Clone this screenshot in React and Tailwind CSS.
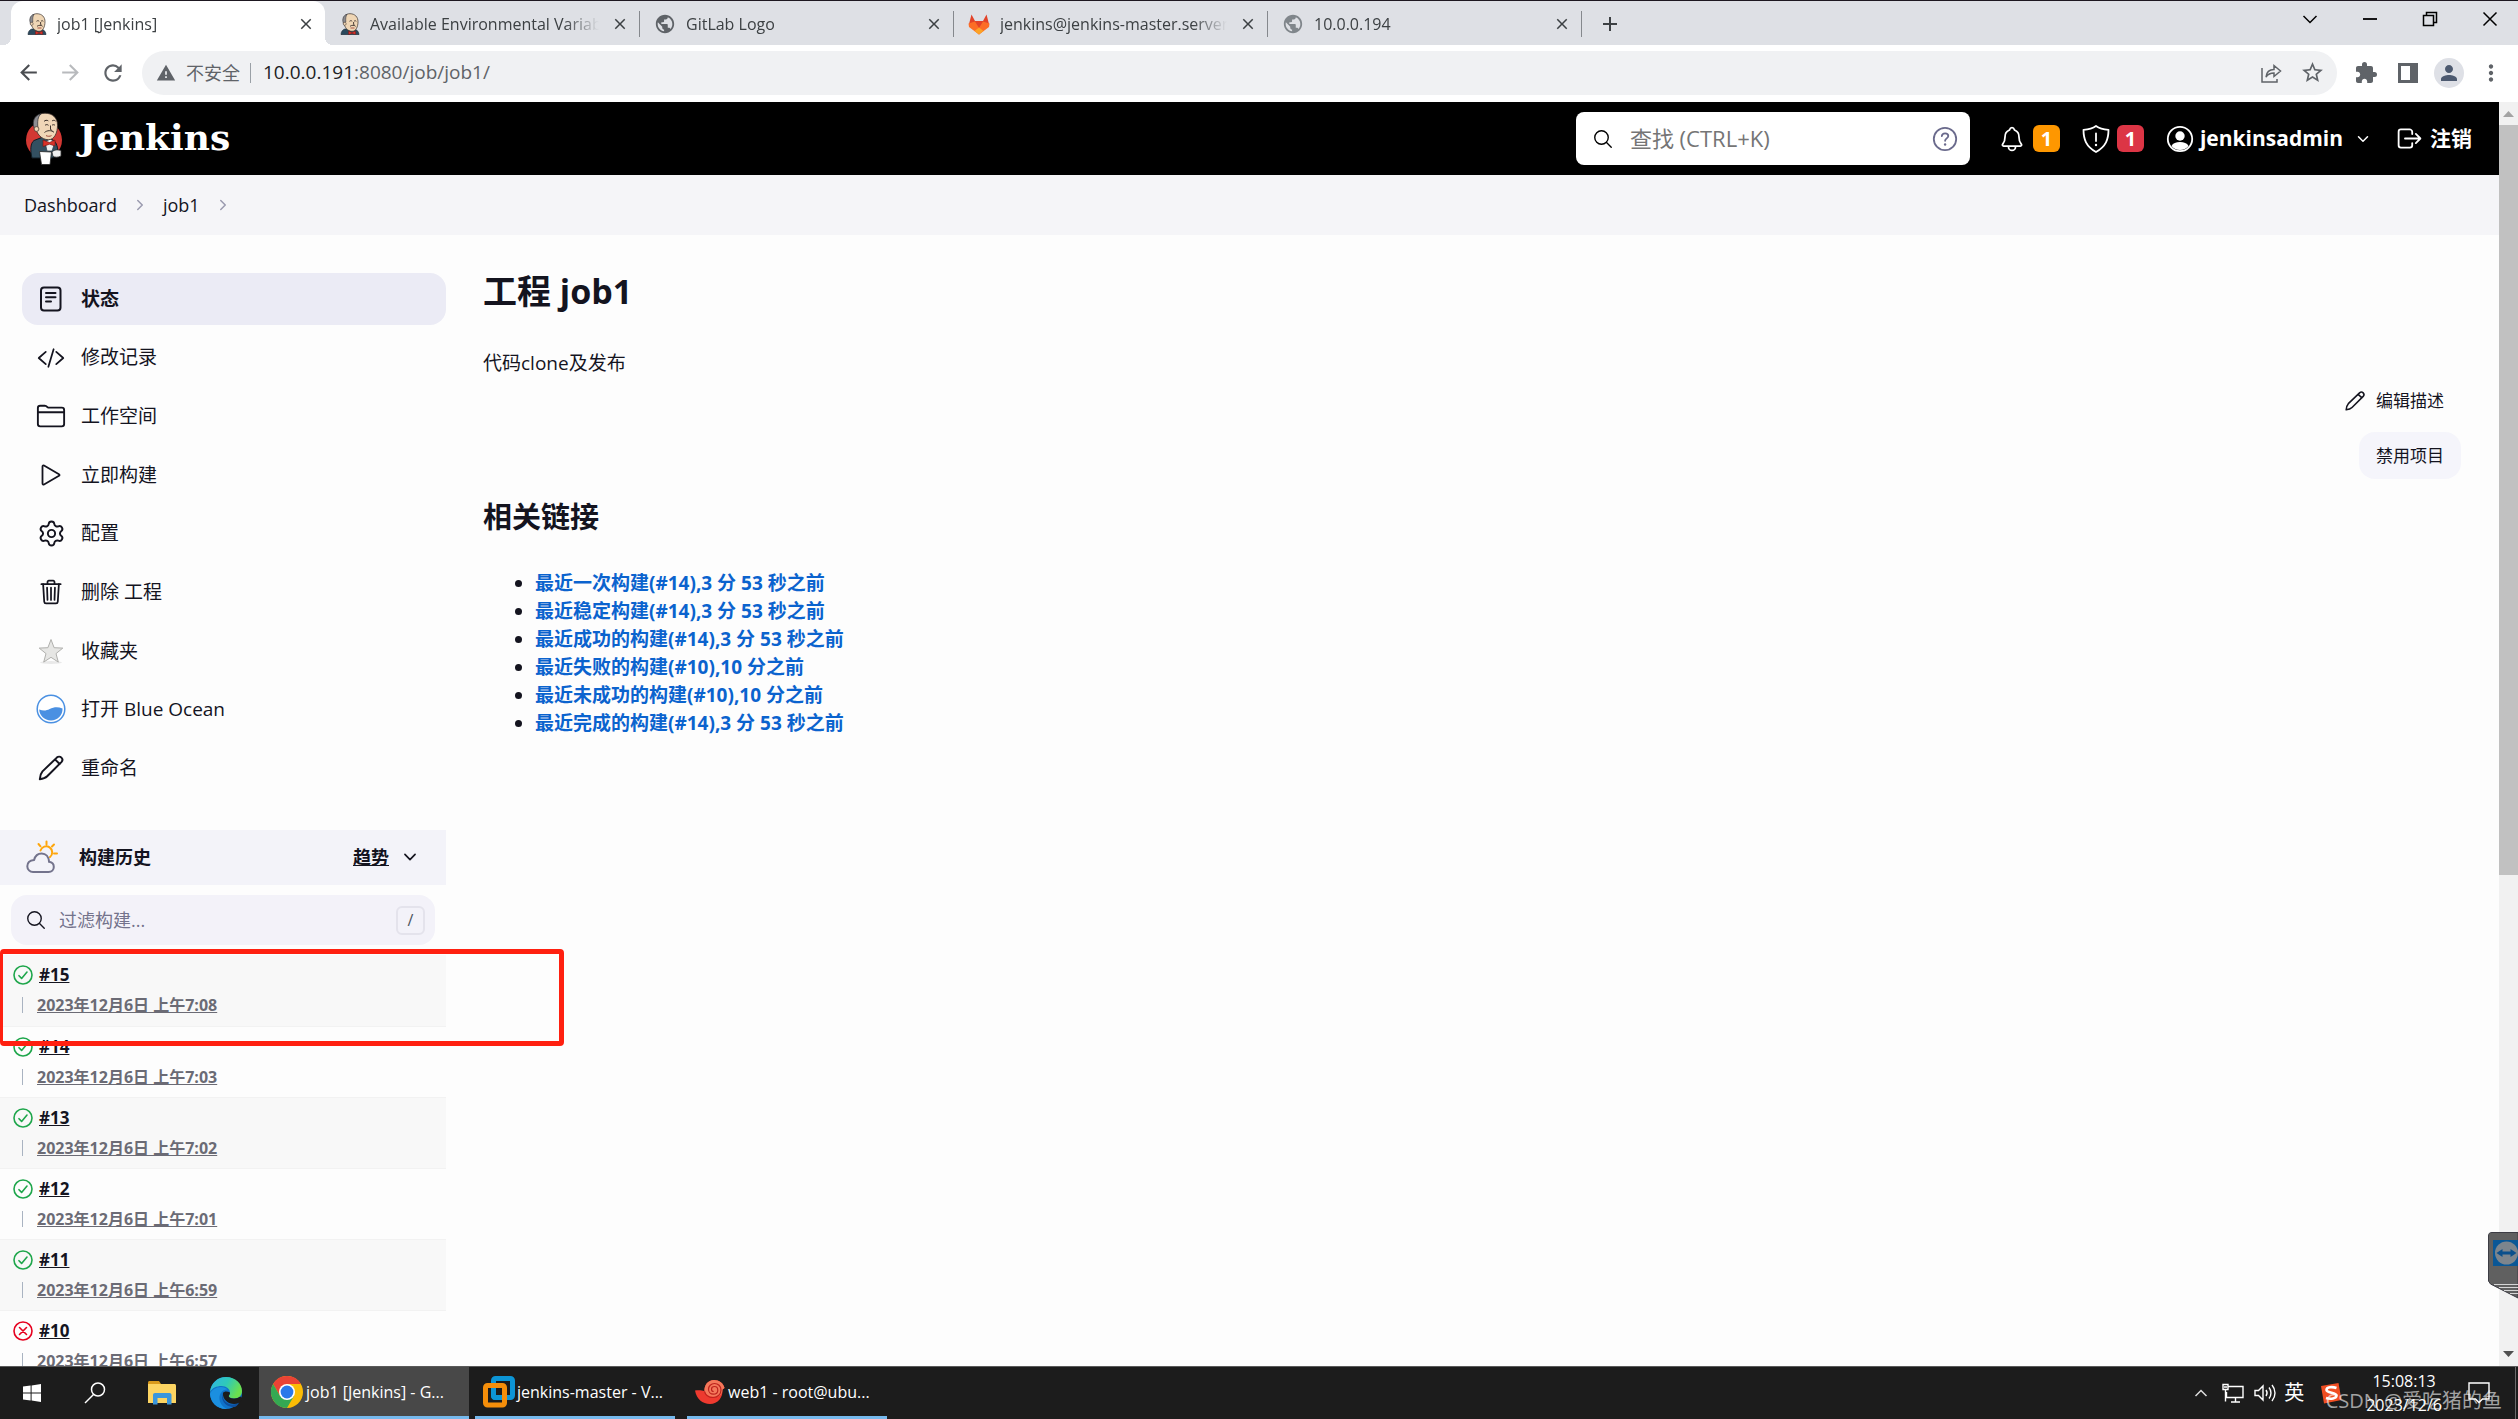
import { Settings } from "lucide-react";
import {
  IoCodeSlashOutline,
  IoFolderOutline,
  IoTrashOutline,
  IoSearchOutline,
  IoNotificationsOutline,
  IoLogOutOutline,
  IoChevronDownOutline,
  IoChevronForwardOutline,
} from "react-icons/io5";
import {
  MdArrowBack,
  MdArrowForward,
  MdRefresh,
  MdWarning,
  MdStarOutline,
  MdExtension,
  MdPerson,
  MdMoreVert,
  MdPublic,
  MdClose,
  MdAdd,
} from "react-icons/md";

// =========================
// ICONS
// =========================
function JenkinsHead({ className }) {
  return (
    <svg viewBox="0 0 20 22" className={className} aria-hidden="true">
      <path d="M1 21.5c.3-3 1.5-4.8 4-5.5h9c3 .6 4.600 2.500 5 5.500z" fill="#2b4a5e" stroke="#1b2b38" strokeWidth=".7" />
      <path d="M3.500 9C2.500 4 5.500.6 10 .7c5 .1 8 3.300 8 8 0 5-2 9.600-6 9.600-4.500 0-7.500-4-8.500-9.300z" fill="#efd6b5" stroke="#3a2f2a" strokeWidth=".7" />
      <path d="M3.400 10.500C2 6 3.300 2.300 7 1.300 5.600 3.500 5.600 6 5.800 9z" fill="#8b8b90" stroke="#3a3a3e" strokeWidth=".6" />
      <circle cx="4.700" cy="10.800" r="1.500" fill="#efd6b5" stroke="#3a2f2a" strokeWidth=".5" />
      <path d="M9.500 8.300c.8-.8 2-.8 2.700 0M14 8.300c.8-.8 1.700-.6 2.300 0M13.600 9v2.500l1 .5M10 13.300c1.500-1.300 4.500-1.300 5.600 0" fill="none" stroke="#3a2f2a" strokeWidth=".9" />
      <path d="M10.500 15h4" stroke="#a04a3a" strokeWidth=".9" />
      <path d="M8.500 18l3.500 1.600 3.600-1.600v3.600L12 20.400l-3.500 1.200z" fill="#d8322a" stroke="#6b1410" strokeWidth=".4" />
    </svg>
  );
}

function JenkinsLogo() {
  return (
    <svg viewBox="0 0 38 53" className="h-[53px] w-[38px]" aria-hidden="true">
      <ellipse cx="19" cy="28" rx="18" ry="18.500" fill="#d33833" />
      <path d="M7 46C5 38 5.500 31 9 28.500l9-3.500 10 3c4 2.500 5 8 5 15l-6 3H10z" fill="#335061" stroke="#101c24" strokeWidth="1" />
      <path d="M20 30l5-3 5 3-3 9h-5z" fill="#f0f0f0" stroke="#2a3a46" strokeWidth=".7" />
      <path d="M10 14C8.500 6 13 1.200 20 1.200c7.500 0 12.500 4.500 12.500 12 0 7.500-3 14.500-9 14.500C16.500 27.700 11.500 22 10 14z" fill="#f0d6b7" stroke="#3a2f2a" strokeWidth=".8" />
      <path d="M10 18C6.500 11 8.500 3.500 16 1.800 12.500 5 12.500 9.500 12.800 15z" fill="#8d8d92" stroke="#3a3a3e" strokeWidth=".8" />
      <circle cx="11.500" cy="17" r="2.400" fill="#f0d6b7" stroke="#3a2f2a" strokeWidth=".7" />
      <path d="M19 9.500c1-1.400 3-1.600 4.300-.6M27 9c1-1 2.600-.9 3.600.1M20 13.300c1-.9 2.600-.9 3.500 0M27 13.300c.8-.8 2.200-.8 3 0M25.500 13.500v4.200l1.700.7M19.500 20.500c2.500-2.400 7-2.400 9.500-.2" fill="none" stroke="#3a2f2a" strokeWidth="1" />
      <path d="M21 23.600c1.500.9 4 .9 5.500 0" fill="none" stroke="#a04a3a" strokeWidth="1" />
      <path d="M18 28l6.500 2.500L30 28v6l-5.500-1.800L18 34.500z" fill="#d8322a" stroke="#6b1410" strokeWidth=".6" />
      <path d="M14.500 39.500l12 .5-1.500 12.500h-8.500z" fill="#fff" stroke="#222" strokeWidth=".8" />
      <path d="M27 40c2-2.500 6-2.500 9-1.500v5.500c-3 1.500-6 1.500-8 .3z" fill="#efefef" stroke="#333" strokeWidth=".8" />
    </svg>
  );
}

function GitLabIcon() {
  return (
    <svg viewBox="0 0 22 21" className="h-[21px] w-[22px]" aria-hidden="true">
      <path d="M3.500.5L1 10l10 10.500L21 10 18.500.5 15 7H7z" fill="#e24329" />
      <path d="M7 7.500L.5 9.500 1 13l10 7.500L21 13l.5-3.500-6.500-2L11 14z" fill="#fc6d26" />
      <path d="M11 13.500L6.500 17l4.500 3.500 4.500-3.500z" fill="#fca326" />
    </svg>
  );
}

const StatusIcon = () => (
  <svg viewBox="0 0 28 28" className="size-7" fill="none" stroke="currentColor" strokeWidth="2" strokeLinecap="round" aria-hidden="true">
    <rect x="4" y="2.500" width="19.500" height="23" rx="3" />
    <path d="M9 8h9.500M9 12.200h9.500M9 16.400h5" />
  </svg>
);

const PlayIcon = () => (
  <svg viewBox="0 0 28 28" className="size-7" fill="none" stroke="currentColor" strokeWidth="1.800" strokeLinejoin="round" aria-hidden="true">
    <path d="M5.500 5.400v17.200c0 .9.800 1.300 1.500.9l15-8.700c.7-.4.700-1.200 0-1.600L7 4.500c-.7-.4-1.500 0-1.500.9z" />
  </svg>
);

const StarIcon = () => (
  <svg viewBox="0 0 28 28" className="size-7" aria-hidden="true">
    <ellipse cx="14" cy="25.500" rx="11" ry="1.500" fill="#e9e9e9" />
    <path d="M14 2.500l3.100 8.200 8.700.4-6.800 5.500 2.300 8.500L14 20.300l-7.300 4.800L9 16.600l-6.800-5.500 8.700-.4z" fill="#e6e6e4" stroke="#b0b0ad" strokeWidth="1" strokeLinejoin="round" />
  </svg>
);

const OceanIcon = () => (
  <svg viewBox="0 0 30 30" className="size-[30px]" aria-hidden="true">
    <circle cx="15" cy="15" r="13.800" fill="#fff" stroke="#4a90e2" strokeWidth="1.500" />
    <path d="M3.200 15.500c4 1.500 7 1.300 10.500-.5 4-2 8-2.500 12.800-.6.400 6.600-5 12-11.500 12S3.400 21.500 3.200 15.500z" fill="#4a90e2" />
  </svg>
);

const PencilIcon = ({ className }) => (
  <svg viewBox="0 0 28 28" className={className} fill="none" stroke="currentColor" strokeWidth="2" strokeLinecap="round" strokeLinejoin="round" aria-hidden="true">
    <path d="M2.800 25.200c.2-3.200 1-5.900 2.700-7.800L19.800 3.600c1.300-1.200 3.400-1.200 4.600 0s1.200 3.200 0 4.500L10.200 22.300c-1.800 1.800-4.500 2.600-7.400 2.900zM18 5.400l4.700 4.600" />
  </svg>
);

const WeatherIcon = () => (
  <svg viewBox="0 0 34 34" className="size-[34px]" fill="none" strokeLinecap="round" aria-hidden="true">
    <path d="M15.500 10.500a6 6 0 1 1 9.500 6.500M21.500 1.500v3M13.500 4l2 2.300M29 4.500l-2 2M29 13.500h3" stroke="#fea60c" strokeWidth="2" />
    <path d="M8 32h15.500c3.200 0 5.300-2.200 5.300-5 0-2.900-2-4.800-4.700-5.200-.4-5-3.300-8.300-7.400-8.300-3.800 0-6.600 2.500-7.600 6.400-4 .4-6.800 2.800-6.800 6.300 0 3.300 2.600 5.800 5.700 5.800z" stroke="#73738c" strokeWidth="2" />
  </svg>
);

const ShieldIcon = () => (
  <svg viewBox="0 0 28 28" className="size-7" fill="none" stroke="currentColor" strokeWidth="1.800" strokeLinecap="round" strokeLinejoin="round" aria-hidden="true">
    <path d="M14 1c3.500 2.600 7.500 3.500 12.500 3.800 0 9.500-2.500 16.500-12.500 22.200C4 21.300 1.500 14.300 1.500 4.800 6.500 4.500 10.500 3.600 14 1z" />
    <path d="M14 8.500v7.500" />
    <circle cx="14" cy="20" r="1.200" fill="currentColor" stroke="none" />
  </svg>
);

const UserIcon = () => (
  <svg viewBox="0 0 28 28" className="size-7" aria-hidden="true">
    <circle cx="14" cy="14" r="12.200" fill="none" stroke="currentColor" strokeWidth="1.800" />
    <circle cx="14" cy="11" r="4.700" fill="currentColor" />
    <path d="M5.500 21c1.500-3 4.500-4 8.500-4s7 1 8.500 4c-2 2.600-5 4-8.500 4s-6.500-1.400-8.500-4z" fill="currentColor" />
  </svg>
);

const HelpIcon = () => (
  <svg viewBox="0 0 26 26" className="size-[26px]" fill="none" stroke="currentColor" strokeWidth="1.800" strokeLinecap="round" aria-hidden="true">
    <circle cx="13" cy="13" r="11.200" />
    <path d="M9.800 10.200c.2-1.900 1.500-2.900 3.300-2.900 1.900 0 3.200 1.100 3.200 2.700 0 2.300-3.200 2.500-3.200 4.800" />
    <circle cx="13.100" cy="18.500" r="1.200" fill="currentColor" stroke="none" />
  </svg>
);

const PassIcon = () => (
  <svg viewBox="0 0 20 20" className="size-5" fill="none" stroke="#1ea64b" strokeWidth="1.600" strokeLinecap="round" strokeLinejoin="round" aria-hidden="true">
    <circle cx="10" cy="10" r="9" />
    <path d="M6 10.700l2.600 2.700L14 7" />
  </svg>
);

const FailIcon = () => (
  <svg viewBox="0 0 20 20" className="size-5" fill="none" stroke="#e6001f" strokeWidth="1.600" strokeLinecap="round" aria-hidden="true">
    <circle cx="10" cy="10" r="9" />
    <path d="M6.500 6.500l7 7M13.500 6.500l-7 7" />
  </svg>
);

const ShareIcon = () => (
  <svg viewBox="0 0 22 22" className="size-[22px]" fill="none" stroke="currentColor" strokeWidth="1.500" aria-hidden="true">
    <path d="M2 6v14h15v-3M6 15c.5-5 3-7.500 8-7.500V3.500L20.500 9 14 14.500V11c-4 0-6 1-8 4z" />
  </svg>
);

const WindowsIcon = () => (
  <svg viewBox="0 0 18 18" className="size-[18px]" fill="#fff" aria-hidden="true">
    <path d="M0 2.600L7.600 1.500v7H0zM8.600 1.400L18 0v8.500H8.600zM0 9.400h7.600v7L0 15.400zM8.600 9.400H18V18l-9.400-1.400z" />
  </svg>
);

const TaskSearchIcon = () => (
  <svg viewBox="0 0 22 22" className="size-[22px]" fill="none" stroke="#fff" strokeWidth="1.500" aria-hidden="true">
    <circle cx="14" cy="7.500" r="6.500" />
    <path d="M9.500 12.500L1 21" />
  </svg>
);

const ExplorerIcon = () => (
  <svg viewBox="0 0 28 24" className="h-6 w-7" aria-hidden="true">
    <path d="M0 1.500C0 .7.700 0 1.500 0H11l2 3H0z" fill="#d99a1c" />
    <path d="M0 3h26.500c.8 0 1.500.7 1.500 1.500V22H0z" fill="#fcd462" />
    <path d="M5 23.500V14c0-1.200.8-2 2-2h14.500c1.200 0 2 .8 2 2v9.500H19V17H9.500v6.500z" fill="#3a96dd" />
  </svg>
);

const EdgeIcon = () => (
  <svg viewBox="0 0 32 32" className="size-8" aria-hidden="true">
    <defs>
      <linearGradient id="edgeTop" x1="0" y1="0" x2="1" y2=".4">
        <stop offset="0" stopColor="#2fb4e8" />
        <stop offset=".55" stopColor="#2fc9b8" />
        <stop offset="1" stopColor="#6be04e" />
      </linearGradient>
    </defs>
    <circle cx="16" cy="16" r="16" fill="#1072c8" />
    <path d="M0 15C1 6 7.500 0 16 0c9.500 0 16 6.500 16 14 0 5-3.500 7.500-8 7.500-3.500 0-5.200-1.200-5.200-2.300 0-.9 1.200-1.400 1.200-3.700 0-3.500-3.500-6.500-8.500-6.500C6.500 9 2 11 0 15z" fill="url(#edgeTop)" />
    <path d="M12 14.500c-5 5-2.500 14 5 17.400C7.500 32.500.6 26 0 17c1.500-4 6-7 11-7 3 0 5 1 6.500 2.500-2 0-4 .5-5.500 2z" fill="#1b8fe0" />
    <path d="M13.500 15c-3 5.500 2 12.500 9 12.500 2.500 0 4.600-.6 6.500-1.700-.8 1.700-2 3-3.500 4-9 1.500-16.500-7-12-14.800z" fill="#0d4f9e" />
    <path d="M13 16c1.200-1.800 4-2 7-.5 0 2.300-1.200 2.800-1.200 3.700 0 1.100 1.700 2.300 5.200 2.300 2.600 0 4.700-.6 6.200-1.900l1.800 1.400c-.5 2-1.500 3.500-3 4.800-7 4-17-2-16-9.800z" fill="#1c1c1c" />
  </svg>
);

const ChromeIcon = () => (
  <svg viewBox="0 0 32 32" className="size-8" aria-hidden="true">
    <circle cx="16" cy="16" r="16" fill="#fbbc05" />
    <path d="M2.140 8A16 16 0 0 1 29.860 8H16L9.070 20z" fill="#ea4335" />
    <path d="M2.140 8L9.070 20H22.930L16 32A16 16 0 0 1 2.140 8z" fill="#34a853" />
    <circle cx="16" cy="16" r="8" fill="#fff" />
    <circle cx="16" cy="16" r="6.400" fill="#2a78ea" />
  </svg>
);

const VmwareIcon = () => (
  <svg viewBox="0 0 32 32" className="size-8" fill="none" strokeWidth="5" aria-hidden="true">
    <rect x="10.500" y="2.500" width="19" height="19" rx="2" stroke="#0c95d6" />
    <rect x="2.500" y="9.500" width="19" height="19.500" rx="2" stroke="#f58e0a" />
    <path d="M10.500 14v5.500c0 1.200.8 2 2 2h6" stroke="#0c95d6" />
  </svg>
);

const XshellIcon = () => (
  <svg viewBox="0 0 30 26" className="h-[26px] w-[30px]" aria-hidden="true">
    <path d="M0 11.500c3.500-.5 7-.3 9.500.8C9 6 13 1 19 1c5 0 9.500 3 10.500 8l-2 1.500c.5 8-4.500 14.500-12.500 14.500C7.500 25 1.500 20 0 11.500z" fill="#ee3a2f" />
    <path d="M9.500 12.300C9 6 13 1 19 1c5 0 9.500 3 10.500 8l-2 1.500c0 5-3.500 7.500-7.500 7.500-5 0-9-1.700-10.500-5.700z" fill="#f4785a" />
    <path d="M9.500 12.300c1 4 4.500 6.200 8.500 6.200 5 0 8-3.500 8-7.500S23 4.500 19.500 4.500s-6 2.700-6 5.700 2.200 5 4.800 5 4.500-1.700 4.500-4-1.500-3.700-3.300-3.700-3 1.200-3 2.700 1 2.300 2.200 2.300" fill="none" stroke="#bd231d" strokeWidth="1.200" />
  </svg>
);

// =========================
// DATA
// =========================
const tabs = [
  { title: "job1 [Jenkins]", icon: <JenkinsHead className="h-[22px] w-5" />, active: true },
  { title: "Available Environmental Variables", icon: <JenkinsHead className="h-[22px] w-5" /> },
  { title: "GitLab Logo", icon: <MdPublic className="size-[22px] text-[#5f6368]" />, line: true },
  { title: "jenkins@jenkins-master.server", icon: <GitLabIcon />, line: true },
  { title: "10.0.0.194", icon: <MdPublic className="size-[22px] text-[#80868b]" />, line: true },
];

const tasks = [
  { label: "状态", icon: <StatusIcon />, active: true },
  { label: "修改记录", icon: <IoCodeSlashOutline className="size-7" /> },
  { label: "工作空间", icon: <IoFolderOutline className="size-[30px]" /> },
  { label: "立即构建", icon: <PlayIcon /> },
  { label: "配置", icon: <Settings className="size-[29px]" strokeWidth={1.6} /> },
  { label: "删除 工程", icon: <IoTrashOutline className="size-7" /> },
  { label: "收藏夹", icon: <StarIcon /> },
  { label: "打开 Blue Ocean", icon: <OceanIcon /> },
  { label: "重命名", icon: <PencilIcon className="size-7" /> },
];

const builds = [
  { id: 15, time: "2023年12月6日 上午7:08", ok: true },
  { id: 14, time: "2023年12月6日 上午7:03", ok: true },
  { id: 13, time: "2023年12月6日 上午7:02", ok: true },
  { id: 12, time: "2023年12月6日 上午7:01", ok: true },
  { id: 11, time: "2023年12月6日 上午6:59", ok: true },
  { id: 10, time: "2023年12月6日 上午6:57", ok: false },
];

const permalinks = [
  "最近一次构建(#14),3 分 53 秒之前",
  "最近稳定构建(#14),3 分 53 秒之前",
  "最近成功的构建(#14),3 分 53 秒之前",
  "最近失败的构建(#10),10 分之前",
  "最近未成功的构建(#10),10 分之前",
  "最近完成的构建(#14),3 分 53 秒之前",
];

// =========================
// BROWSER
// =========================
function TabStrip() {
  return (
    <div className="flex h-[45px] items-end border-t border-[#1d1720] bg-[#dee0e5] pl-[11px] text-base text-[#3c4043]">
      {tabs.map((tab) => (
        <div
          key={tab.title}
          className={
            tab.active
              ? "relative flex h-11 w-[314px] items-center rounded-t-xl bg-white pt-0.5 pr-2.5 pl-4 before:absolute before:bottom-0 before:-left-2 before:size-2 before:bg-[radial-gradient(circle_at_0_0,transparent_8px,white_8px)] after:absolute after:-right-2 after:bottom-0 after:size-2 after:bg-[radial-gradient(circle_at_100%_0,transparent_8px,white_8px)]"
              : "flex h-11 w-[314px] items-center pt-0.5 pr-2.5"
          }
        >
          {!tab.active && (
            <span className={`mr-3.5 h-[26px] w-px ${tab.line ? "bg-[#85888d]" : ""}`} />
          )}
          {tab.icon}
          <span className="ml-2.5 flex-1 overflow-hidden mask-r-from-85% whitespace-nowrap">
            {tab.title}
          </span>
          <button aria-label="关闭标签页" className="ml-3">
            <MdClose className="size-[18px]" />
          </button>
        </div>
      ))}
      <button aria-label="新标签页" className="flex h-11 items-center gap-4 pt-0.5">
        <span className="h-[26px] w-px bg-[#85888d]" />
        <MdAdd className="size-6" />
      </button>
      <div className="ml-auto flex h-11 items-center gap-9 pr-4 pb-2 text-black">
        <button aria-label="搜索标签页">
          <svg viewBox="0 0 24 24" className="size-6" fill="none" stroke="currentColor" strokeWidth="1.500"><path d="M5.500 9l6.500 6.500L18.500 9" /></svg>
        </button>
        <button aria-label="最小化">
          <svg viewBox="0 0 24 24" className="size-6" stroke="currentColor" strokeWidth="1.800"><path d="M5 12h14" /></svg>
        </button>
        <button aria-label="还原">
          <svg viewBox="0 0 24 24" className="size-6" fill="none" stroke="currentColor" strokeWidth="1.500"><path d="M5.500 8.500h10v10h-10zM8.500 8.500v-3h10v10h-3" /></svg>
        </button>
        <button aria-label="关闭">
          <svg viewBox="0 0 24 24" className="size-6" stroke="currentColor" strokeWidth="1.500"><path d="M5.500 5.500l13 13M18.500 5.500l-13 13" /></svg>
        </button>
      </div>
    </div>
  );
}

function Toolbar() {
  return (
    <div className="flex h-[57px] items-center bg-white pr-3.5 pb-0.5 pl-4 text-[#5f6368]">
      <button aria-label="后退"><MdArrowBack className="size-[25px] text-[#4a4d51]" /></button>
      <button aria-label="前进" className="ml-[17px]"><MdArrowForward className="size-[25px] text-[#b8babd]" /></button>
      <button aria-label="重新加载" className="ml-[17px]"><MdRefresh className="size-[26px]" /></button>
      <div className="ml-4 flex h-11 flex-1 items-center rounded-full bg-[#f0f1f3] pr-3 pl-3.5 text-lg">
        <MdWarning className="size-5" />
        <span className="ml-2.5">不安全</span>
        <span className="ml-2.5 h-5 w-px bg-[#9aa0a6]" />
        <div className="ml-3 flex-1 text-[19px]">
          <span className="text-[#202124]">10.0.0.191</span>:8080/job/job1/
        </div>
        <button aria-label="分享"><ShareIcon /></button>
        <button aria-label="收藏" className="ml-[18px]"><MdStarOutline className="size-[25px]" /></button>
      </div>
      <button aria-label="扩展程序" className="ml-[17px]"><MdExtension className="size-6" /></button>
      <button aria-label="侧边栏" className="ml-5">
        <svg viewBox="0 0 20 20" className="size-5"><path fillRule="evenodd" d="M0 0h20v20H0zM3 3v14h9V3z" fill="currentColor" /></svg>
      </button>
      <button aria-label="个人资料" className="ml-4 flex size-[30px] items-center justify-center rounded-full bg-[#dee0e6] text-[#4d5a70]">
        <MdPerson className="size-6" />
      </button>
      <button aria-label="菜单" className="ml-3.5"><MdMoreVert className="size-[26px]" /></button>
    </div>
  );
}

// =========================
// JENKINS
// =========================
function Header() {
  return (
    <header className="flex h-[73px] shrink-0 items-center bg-black pr-[27px] pl-[25px] text-white">
      <a href="#" className="flex items-center gap-4">
        <JenkinsLogo />
        <span className="pb-1 font-['DejaVu_Serif',serif] text-4xl font-bold">Jenkins</span>
      </a>
      <label className="ml-auto flex h-[53px] w-[394px] items-center rounded-lg bg-white pr-3 pl-4 text-black">
        <IoSearchOutline className="size-[22px]" />
        <input
          type="search"
          placeholder="查找 (CTRL+K)"
          className="ml-4 min-w-0 flex-1 text-[22px] outline-none placeholder:text-[#757575]"
        />
        <span className="text-[#6a6a8c]"><HelpIcon /></span>
      </label>
      <a href="#" className="ml-7 flex items-center gap-[7px]">
        <IoNotificationsOutline className="size-7" />
        <span className="flex size-[27px] items-center justify-center rounded-md bg-[#fe9700] text-xl font-bold">1</span>
      </a>
      <a href="#" className="ml-[22px] flex items-center gap-[7px]">
        <ShieldIcon />
        <span className="flex size-[27px] items-center justify-center rounded-md bg-[#dc3545] text-xl font-bold">1</span>
      </a>
      <a href="#" className="ml-[22px] flex items-center text-[21px] font-bold">
        <UserIcon />
        <span className="ml-1.5">jenkinsadmin</span>
        <IoChevronDownOutline className="ml-3 size-4" />
      </a>
      <a href="#" className="ml-6 flex items-center gap-1.5 text-[21px] font-bold">
        <IoLogOutOutline className="size-[29px]" />
        注销
      </a>
    </header>
  );
}

function Sidebar() {
  return (
    <aside className="w-[446px] shrink-0">
      <nav className="mt-[38px] flex h-[521px] flex-col justify-between pl-[22px] text-[19px]">
        {tasks.map((task) => (
          <a
            key={task.label}
            href="#"
            className={`flex h-[52px] items-center rounded-2xl pl-3.5 ${task.active ? "bg-[#ebebf5] font-bold" : ""}`}
          >
            <span className="flex w-[30px] justify-center">{task.icon}</span>
            <span className="ml-[15px]">{task.label}</span>
          </a>
        ))}
      </nav>

      {/* Build history */}
      <div className="mt-9 flex h-[55px] items-center bg-[#f3f3f9] pr-[27px] pb-0.5 pl-[25px] text-lg font-bold">
        <WeatherIcon />
        <span className="ml-5">构建历史</span>
        <a href="#" className="ml-auto underline">趋势</a>
        <IoChevronDownOutline className="ml-3 size-[18px]" />
      </div>

      <label className="mx-[11px] mt-2.5 flex h-[50px] items-center rounded-2xl bg-[#f3f2f9] pr-2.5 pl-3.5">
        <IoSearchOutline className="size-[22px]" />
        <input
          type="search"
          placeholder="过滤构建..."
          className="ml-3 min-w-0 flex-1 text-lg outline-none placeholder:text-[#73738c]"
        />
        <kbd className="flex size-[29px] items-center justify-center rounded-md border-2 border-[#e4e3ec] font-['Open_Sans',sans-serif] text-base text-[#4d545d]">
          /
        </kbd>
      </label>

      <div className="relative mt-2.5">
        <table className="w-full">
          <tbody>
            {builds.map((build) => (
              <tr key={build.id} className="h-[71px] border-b border-[#f2f2f2] odd:bg-[#f8f8f8]">
                <td className="pt-1 pl-[13px] align-top">
                  <div className="flex h-8 items-center gap-1.5">
                    {build.ok ? <PassIcon /> : <FailIcon />}
                    <a href="#" className="text-[17px] font-bold underline">#{build.id}</a>
                  </div>
                  <div className="flex h-7 items-center gap-3.5 pl-[9px]">
                    <span className="h-4 w-px bg-[#a9b3c1]" />
                    <a href="#" className="text-base font-bold text-[#6b6b75] underline">{build.time}</a>
                  </div>
                </td>
              </tr>
            ))}
          </tbody>
        </table>
        {/* Highlight around the latest build */}
        <div className="absolute -top-1.5 left-0 h-[97px] w-[564px] rounded-sm border-[5px] border-l-[3px] border-[#ff2010]" />
      </div>
    </aside>
  );
}

function Project() {
  return (
    <main className="flex min-w-0 flex-1 flex-col pt-9 pr-[38px] pl-[37px]">
      <h1 className="text-[34px] leading-10 font-bold">工程 job1</h1>
      <p className="mt-[38px] text-[19px] leading-7">代码clone及发布</p>

      <div className="flex flex-col items-end gap-2 text-[17px]">
        <button className="flex h-[47px] items-center gap-2.5 px-[17px]">
          <PencilIcon className="size-[22px]" />
          编辑描述
        </button>
        <button className="h-[47px] rounded-2xl bg-[#f5f5fb] px-[17px]">禁用项目</button>
      </div>

      <h2 className="mt-5 text-[29px] leading-9 font-bold">相关链接</h2>
      <ul className="mt-[34px] list-disc pl-[52px] text-[19px] leading-7 font-bold">
        {permalinks.map((link) => (
          <li key={link}>
            <a href="#" className="text-[#0b63ce]">{link}</a>
          </li>
        ))}
      </ul>
    </main>
  );
}

function Scrollbar() {
  return (
    <div className="flex w-[19px] shrink-0 flex-col items-center bg-[#f1f1f1]">
      <svg viewBox="0 0 19 23" className="h-[23px] w-[19px]"><path d="M4 15l5.500-6 5.500 6z" fill="#a3a3a3" /></svg>
      <div className="flex w-full flex-1 flex-col">
        <div className="basis-8/13 bg-[#c1c1c1]" />
      </div>
      <svg viewBox="0 0 19 23" className="h-[23px] w-[19px]"><path d="M4 8l5.500 6 5.500-6z" fill="#505050" /></svg>
    </div>
  );
}

// =========================
// TASKBAR
// =========================
function Taskbar() {
  return (
    <footer className="relative flex h-[53px] items-center border-t border-[#5a5a5a] bg-[#1c1c1c] text-base text-white">
      <button aria-label="开始" className="ml-[23px]"><WindowsIcon /></button>
      <button aria-label="搜索" className="ml-[43px]"><TaskSearchIcon /></button>
      <button aria-label="文件资源管理器" className="ml-[42px]"><ExplorerIcon /></button>
      <button aria-label="Edge" className="ml-[34px]"><EdgeIcon /></button>
      <button className="ml-[17px] flex h-full w-[210px] items-center gap-[3px] border-b-[3px] border-[#76b9ed] bg-[#484848] pl-3 whitespace-nowrap">
        <ChromeIcon />
        job1 [Jenkins] - G...
      </button>
      <button className="ml-1.5 flex h-full w-[200px] items-center gap-0.5 border-b-[3px] border-[#76b9ed] pl-2 whitespace-nowrap">
        <VmwareIcon />
        jenkins-master - V...
      </button>
      <button className="ml-3 flex h-full w-[200px] items-center gap-[3px] border-b-[3px] border-[#76b9ed] pl-2 whitespace-nowrap">
        <XshellIcon />
        web1 - root@ubu...
      </button>

      <div className="ml-auto flex h-full items-center pr-7">
        <svg viewBox="0 0 14 14" className="size-3.5" fill="none" stroke="#ddd" strokeWidth="1.500"><path d="M1.500 10L7 4.500l5.500 5.500" /></svg>
        <svg viewBox="0 0 22 20" className="ml-3.5 h-5 w-[22px]" fill="none" stroke="#fff" strokeWidth="1.400">
          <path d="M6 3.500h15v11H4.500V9M9 19h9M13.500 14.500V19M1 1.500h5v5H1zM3.500 6.500v12M2 4h3" />
        </svg>
        <svg viewBox="0 0 22 20" className="ml-2.5 h-5 w-[22px]" fill="none" stroke="#fff" strokeWidth="1.400">
          <path d="M1 7.500h3.500L9 3v14l-4.500-4.500H1zM12 7c1.300 1.800 1.300 4.200 0 6M15 4.500c2.600 3.200 2.600 7.800 0 11M18 2c4 4.700 4 11.300 0 16" />
        </svg>
        <span className="ml-2 text-xl">英</span>
        <svg viewBox="0 0 22 22" className="ml-4 size-[22px]">
          <path d="M1 4L18.500 1 21.500 18 4 21.500z" fill="#f04e23" />
          <path d="M16.500 6C12 4.500 6.500 5 6.500 8s10 2.500 10 5.500-6 4-10.500 2.500" fill="none" stroke="#fff" strokeWidth="2.600" />
        </svg>
        <div className="ml-6 text-center leading-6">
          <div>15:08:13</div>
          <div>2023/12/6</div>
        </div>
        <svg viewBox="0 0 22 22" className="ml-[26px] size-[22px]" fill="none" stroke="#fff" strokeWidth="1.400"><path d="M1 1h20v16h-6.500L11 20.500 7.500 17H1z" /></svg>
      </div>
      <div className="absolute inset-y-0 right-0.5 w-px bg-[#6a6a6a]" />
      <div className="absolute right-4 bottom-1 text-xl whitespace-nowrap text-white/60">CSDN @爱吃猪的鱼</div>
    </footer>
  );
}

export default function App() {
  return (
    <div className="relative flex h-screen flex-col overflow-hidden bg-[#fdfdfd] font-['Open_Sans','Noto_Sans_CJK_SC',sans-serif] text-[#14141f]">
      <TabStrip />
      <Toolbar />

      <div className="flex min-h-0 flex-1">
        <div className="flex min-w-0 flex-1 flex-col overflow-hidden">
          <Header />
          <div className="flex h-[60px] shrink-0 items-center bg-[#f5f5f8] pl-6 text-lg">
            <a href="#">Dashboard</a>
            <IoChevronForwardOutline className="mx-[15px] size-4 text-[#9a9aaf]" />
            <a href="#">job1</a>
            <IoChevronForwardOutline className="mx-[15px] size-4 text-[#9a9aaf]" />
          </div>
          <div className="flex min-h-0 flex-1">
            <Sidebar />
            <Project />
          </div>
        </div>
        <Scrollbar />
      </div>

      <Taskbar />

      {/* TeamViewer side handle */}
      <svg viewBox="0 0 30 67" className="absolute right-0 bottom-[120px] h-[67px] w-[30px]">
        <path d="M30 .5H4C1.500.5.500 1.500.5 4v45l2 3L30 66z" fill="#606060" stroke="#3c3c44" />
        <path d="M6 52.500h24M11 55.500h19M16 58.500h14M22 61.500h8" stroke="#d5d5d5" strokeWidth="1.200" />
        <path d="M5 8h25v26H5z" fill="#0a5796" />
        <circle cx="18.500" cy="21" r="11.500" fill="#7d858d" />
        <path d="M8.500 21l6-4v2.500h8V17l6 4-6 4v-2.500h-8V25z" fill="#0a4f8c" />
      </svg>
    </div>
  );
}
